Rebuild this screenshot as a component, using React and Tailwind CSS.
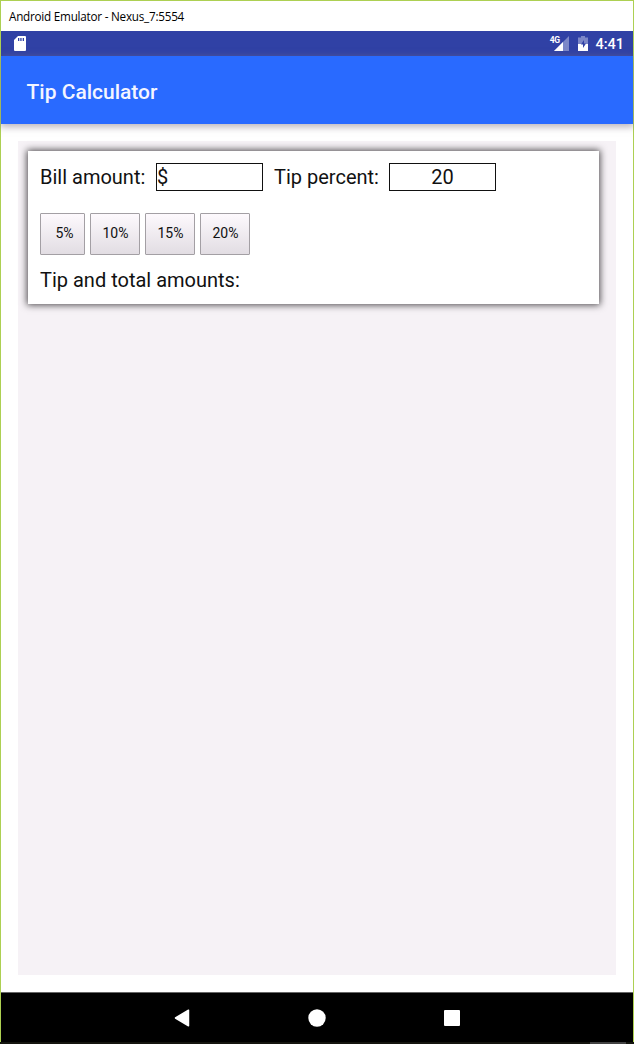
import React from "react";

const presets = [
  { label: "5%", size: "w-[45px] pl-1" },
  { label: "10%", size: "w-[50px] pl-px" },
  { label: "15%", size: "w-[50px] pl-px" },
  { label: "20%", size: "w-[50px] pl-px" },
];

function StatusBar() {
  return (
    <div className="flex h-[25px] shrink-0 items-center justify-between bg-[#3041a5] pr-[9px] pl-[13px] text-white">
      <svg width="12" height="15" viewBox="0 0 12 15" aria-hidden="true">
        <path d="M4 0h7q1 0 1 1v13q0 1-1 1H1q-1 0-1-1V4z" fill="#fff" />
        <path d="M4 2h1.3v3H4zM6.3 2h1.3v3H6.3zM8.7 2H10v3H8.7z" fill="#3041a5" />
      </svg>
      <div className="flex items-center">
        <div className="flex h-[15px] items-start">
          <span className="-mr-[5px] text-[8.500px] leading-[8px] font-bold tracking-[-0.5px]">4G</span>
          <svg width="15" height="15" viewBox="0 0 15 15" aria-hidden="true">
            <path d="M15 0v15H0z" fill="#7c87c8" />
            <path d="M9 6v9H0z" fill="#fff" />
          </svg>
        </div>
        <svg className="ml-[9px]" width="10" height="15" viewBox="0 0 10 15" aria-hidden="true">
          <path d="M3 0h4v1.500h3V8H0V1.500h3z" fill="#7c87c8" />
          <path d="M0 8h10v7H0z" fill="#fff" />
          <path d="M6 4L3 8.500h2V12l3-4.500H6z" fill="#3041a5" />
        </svg>
        <span className="mt-[2px] ml-[7px] text-[14.500px] leading-[25px] font-medium">4:41</span>
      </div>
    </div>
  );
}

function TipForm() {
  return (
    <section className="h-[153px] w-[571px] bg-white pt-[12px] pl-[12px] text-[20px] leading-[28px] text-[#111] shadow-[0_0_7px_1px_#4a474a]">
      <div className="flex h-[28px]">
        <label className="w-[116px] whitespace-nowrap">Bill amount:</label>
        <div className="w-[107px] border border-[#111] leading-[26px]">$</div>
        <label className="ml-[11px] w-[115px] whitespace-nowrap">Tip percent:</label>
        <div className="w-[107px] border border-[#111] text-center leading-[26px]">20</div>
      </div>
      <div className="mt-[22px] flex gap-[5px]">
        {presets.map(({ label, size }) => (
          <button
            key={label}
            className={`h-[42px] rounded-[1px] border border-[#a39fa4] bg-linear-to-b from-[#fdf9fd] to-[#e2dde3] pb-[3px] text-[14px] leading-[18px] ${size}`}
          >
            {label}
          </button>
        ))}
      </div>
      <p className="mt-[11px]">Tip and total amounts:</p>
    </section>
  );
}

function NavigationBar() {
  return (
    <nav className="flex h-[50px] shrink-0 items-center gap-[118px] border-t border-[#666] bg-black pl-[173px]">
      <svg width="16" height="18" viewBox="0 0 16 18" aria-hidden="true">
        <path d="M14.500 1.200v15.600L1.500 9z" fill="#fff" stroke="#fff" strokeWidth="1.500" strokeLinejoin="round" />
      </svg>
      <svg width="18" height="18" viewBox="0 0 18 18" aria-hidden="true">
        <circle cx="9" cy="9" r="8.700" fill="#fff" />
      </svg>
      <svg width="16" height="16" viewBox="0 0 16 16" aria-hidden="true">
        <rect width="16" height="16" rx="1" fill="#fff" />
      </svg>
    </nav>
  );
}

export default function App() {
  return (
    <div className="flex h-[1044px] w-[634px] flex-col overflow-hidden bg-[#14150f] font-[Roboto,sans-serif]">
      <div className="flex h-[1042px] flex-col border-x border-t border-[#add052] bg-white">
        <header className="h-[30px] shrink-0 bg-white pl-[8px] font-['Open_Sans',sans-serif] text-[11.700px] leading-[30px] tracking-[-0.230px] whitespace-nowrap text-black">
          Android Emulator - Nexus_7:5554
        </header>
        <StatusBar />
        <div className="h-[68px] shrink-0 bg-[#296aff] pl-[25.500px] text-[21px] leading-[72px] font-medium text-[#f4f5ff] shadow-[0_2px_7px_1px_#80748088]">
          Tip Calculator
        </div>
        <main className="mt-[17px] mr-[17px] ml-[17px] h-[834px] bg-[#f6f2f6] pt-[10px] pl-[10px]">
          <TipForm />
        </main>
        <div className="flex-1" />
        <NavigationBar />
      </div>
      <div className="mr-[8px] h-[2px] w-[36px] self-end bg-[#424242]" />
    </div>
  );
}
